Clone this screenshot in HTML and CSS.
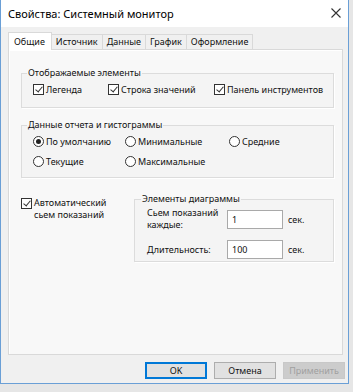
FILE: index.html
```html
<!DOCTYPE html>
<html lang="ru">
<head>
  <meta charset="UTF-8">
  <title>Свойства: Системный монитор</title>
  <link rel="stylesheet" href="styles.css">
</head>
<body>
  <div class="window">
    <div class="titlebar">
      <span class="title">Свойства: Системный монитор</span>
      <svg class="close" width="10" height="10" viewBox="0 0 10 10">
        <path d="M0.5 0.5 L9.5 9.5 M9.5 0.5 L0.5 9.5" stroke="#333" stroke-width="1.1" fill="none"/>
      </svg>
    </div>

    <div class="client">
      <div class="tabs">
        <div class="tab active">Общие</div>
        <div class="tab">Источник</div>
        <div class="tab">Данные</div>
        <div class="tab">График</div>
        <div class="tab">Оформление</div>
      </div>

      <div class="panel">
        <fieldset class="group group-show">
          <legend>Отображаемые элементы</legend>
          <div class="row">
            <label class="check w-legend"><span class="box checked"></span>Легенда</label>
            <label class="check w-values"><span class="box checked"></span>Строка значений</label>
            <label class="check"><span class="box checked"></span>Панель инструментов</label>
          </div>
        </fieldset>

        <fieldset class="group group-data">
          <legend>Данные отчета и гистограммы</legend>
          <div class="radios">
            <label class="check"><span class="radio on"></span>По умолчанию</label>
            <label class="check"><span class="radio"></span>Минимальные</label>
            <label class="check"><span class="radio"></span>Средние</label>
            <label class="check"><span class="radio"></span>Текущие</label>
            <label class="check"><span class="radio"></span>Максимальные</label>
          </div>
        </fieldset>

        <div class="lower">
          <label class="check auto"><span class="box checked"></span><span>Автоматический<br>сьем показаний</span></label>

          <fieldset class="group group-chart">
            <legend>Элементы диаграммы</legend>
            <div class="field">
              <span class="field-label">Сьем показаний<br>каждые:</span>
              <span class="input">1</span>
              <span class="unit">сек.</span>
            </div>
            <div class="field">
              <span class="field-label">Длительность:</span>
              <span class="input">100</span>
              <span class="unit">сек.</span>
            </div>
          </fieldset>
        </div>
      </div>

      <div class="buttons">
        <div class="btn default">OK</div>
        <div class="btn">Отмена</div>
        <div class="btn disabled">Применить</div>
      </div>
    </div>
  </div>
</body>
</html>
```

FILE: styles.css
```css
body {
  margin: 0;
  background: #e6e6e6;
  font-family: "Noto Sans", "Open Sans", sans-serif;
  font-size: 9px;
  color: #111;
}
.window {
  width: 347px;
  height: 383px;
  border: 1px solid #6a9fd6;
  border-top: none;
  background: #f0f0f0;
  display: flex;
  flex-direction: column;
}
.titlebar {
  height: 26px;
  background: #fff;
  display: flex;
  align-items: center;
  justify-content: space-between;
  padding: 0 6px 1px 7px;
}
.title {
  font-size: 11px;
  color: #000;
}
.close {
  margin-right: 1px;
}
.client {
  flex: 1;
  padding: 5px 0 0 7px;
  display: flex;
  flex-direction: column;
}
.tabs {
  display: flex;
  align-items: flex-end;
  height: 17px;
  position: relative;
  z-index: 1;
}
.tab {
  height: 14px;
  line-height: 14px;
  padding: 0 4px;
  border: 1px solid #d9d9d9;
  border-bottom: none;
  margin-left: -1px;
  background: #f0f0f0;
}
.tab.active {
  height: 17px;
  line-height: 17px;
  background: #fff;
  margin-left: 0;
  padding: 0 6px 0 5px;
  margin-bottom: -1px;
}
.panel {
  width: 335px;
  height: 306px;
  border: 1px solid #d9d9d9;
  background: #f8f8f8;
  box-shadow: inset 1px 1px 0 #fff;
  padding: 17px 0 0 12px;
  box-sizing: border-box;
}
.group {
  margin: 0;
  padding: 0;
  border: 1px solid #dcdcdc;
  box-shadow: 1px 1px 0 #fff;
  background: #f4f4f4;
  width: 313px;
  box-sizing: border-box;
}
.group legend {
  padding: 0 1px;
  margin-left: 5px;
  line-height: 12px;
}
.group-show {
  height: 41px;
}
.group-show .row {
  display: flex;
  padding: 4px 0 0 11px;
}
.check {
  display: flex;
  align-items: center;
  white-space: nowrap;
}
.w-legend { width: 75px; }
.w-values { width: 106px; }
.box {
  width: 9px;
  height: 9px;
  border: 1px solid #333;
  background: #fff;
  margin-right: 2px;
  position: relative;
  flex: none;
}
.box.checked::after {
  content: "";
  position: absolute;
  left: 1px;
  top: 0px;
  width: 6px;
  height: 3px;
  border-left: 1.3px solid #333;
  border-bottom: 1.3px solid #333;
  transform: translate(0.5px, 1.5px) rotate(-50deg);
}
.group-data {
  margin-top: 11px;
  height: 59px;
}
.radios {
  display: grid;
  grid-template-columns: 92px 104px auto;
  row-gap: 7px;
  padding: 4px 0 0 11px;
}
.radio {
  width: 9px;
  height: 9px;
  border: 1px solid #333;
  border-radius: 50%;
  background: #fff;
  margin-right: 2px;
  position: relative;
  flex: none;
}
.radio.on::after {
  content: "";
  position: absolute;
  left: 2px;
  top: 2px;
  width: 5px;
  height: 5px;
  border-radius: 50%;
  background: #222;
}
.lower {
  display: flex;
  margin-top: 15px;
}
.auto {
  align-items: flex-start;
  width: 113px;
  line-height: 12px;
  padding-top: 4px;
}
.auto .box {
  margin-top: 1px;
}
.group-chart {
  width: 200px;
  height: 69px;
  padding: 0 0 0 12px;
}
.group-chart legend {
  margin-left: -6px;
}
.field {
  display: flex;
  align-items: center;
  margin-top: 2px;
}
.field + .field {
  margin-top: 9px;
}
.field-label {
  width: 80px;
  line-height: 12px;
}
.input {
  width: 50px;
  height: 17px;
  line-height: 17px;
  border: 1px solid #a9a9a9;
  background: #fff;
  padding-left: 4px;
  box-sizing: content-box;
}
.unit {
  margin-left: 5px;
}
.buttons {
  display: flex;
  justify-content: flex-end;
  gap: 7px;
  padding-right: 3px;
  margin-top: 7px;
}
.btn {
  width: 60px;
  height: 15px;
  line-height: 15px;
  text-align: center;
  border: 1px solid #adadad;
  background: #e1e1e1;
}
.btn.default {
  border-color: #0078d7;
  box-shadow: inset 0 0 0 1px #0078d7;
}
.btn.disabled {
  border-color: #c8c8c8;
  background: #cccccc;
  color: #a0a0a0;
}
```
